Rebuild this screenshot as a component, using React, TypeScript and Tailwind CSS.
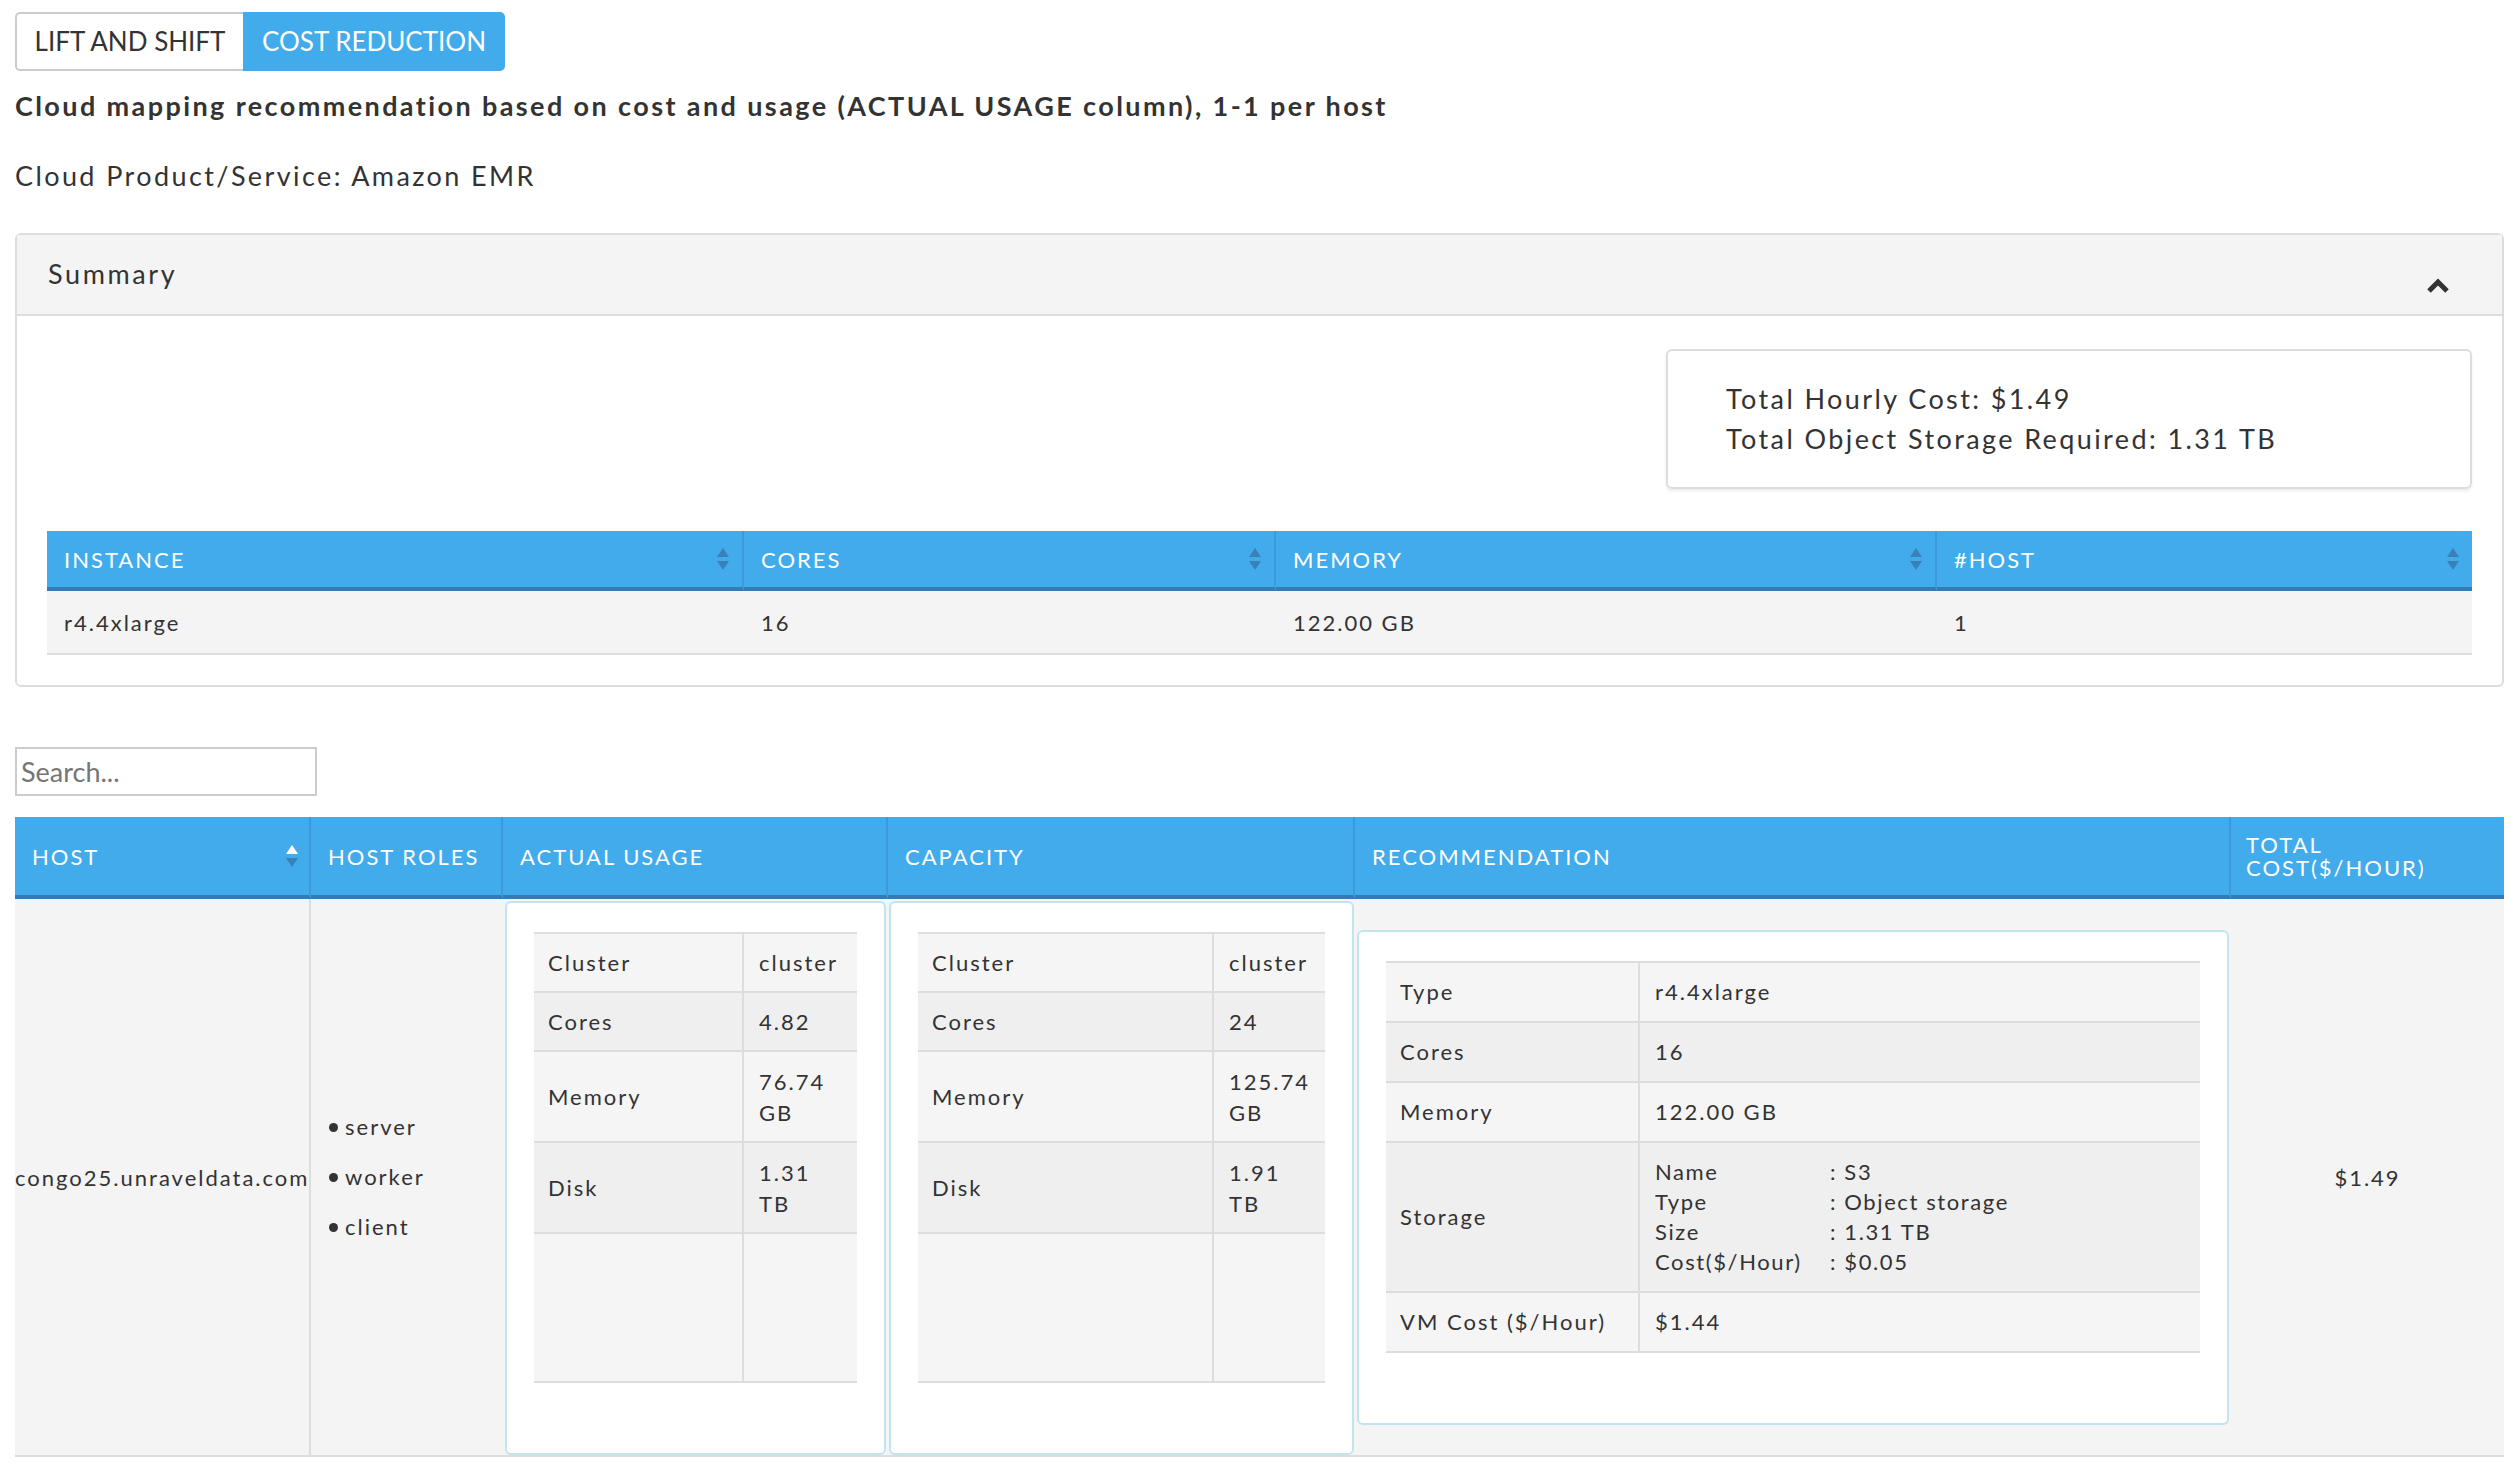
import React from "react";

type KvRow = { label: string; value?: React.ReactNode; empty?: boolean };

const summaryCols = [
  { label: "INSTANCE", value: "r4.4xlarge" },
  { label: "CORES", value: "16" },
  { label: "MEMORY", value: "122.00 GB" },
  { label: "#HOST", value: "1" },
];

const usageRows: KvRow[] = [
  { label: "Cluster", value: "cluster" },
  { label: "Cores", value: "4.82" },
  { label: "Memory", value: ["76.74", "GB"] },
  { label: "Disk", value: ["1.31", "TB"] },
  { label: "", empty: true },
];

const capacityRows: KvRow[] = [
  { label: "Cluster", value: "cluster" },
  { label: "Cores", value: "24" },
  { label: "Memory", value: ["125.74", "GB"] },
  { label: "Disk", value: ["1.91", "TB"] },
  { label: "", empty: true },
];

const storage = [
  ["Name", "S3"],
  ["Type", "Object storage"],
  ["Size", "1.31 TB"],
  ["Cost($/Hour)", "$0.05"],
];

const recRows: KvRow[] = [
  { label: "Type", value: "r4.4xlarge" },
  { label: "Cores", value: "16" },
  { label: "Memory", value: "122.00 GB" },
  {
    label: "Storage",
    value: (
      <div className="grid grid-cols-[175px_1fr] tracking-[1.6px]">
        {storage.map(([k, v]) => (
          <React.Fragment key={k}>
            <span>{k}</span>
            <span>: {v}</span>
          </React.Fragment>
        ))}
      </div>
    ),
  },
  { label: "VM Cost ($/Hour)", value: "$1.44" },
];

function SortIcon({ active }: { active?: boolean }) {
  return (
    <svg width="14" height="24" viewBox="0 0 14 24" className="shrink-0">
      <path d="M7 1 L13 10 H1 Z" fill={active ? "#ffffff" : "#3a80b9"} />
      <path d="M7 23 L13 14 H1 Z" fill="#3a80b9" />
    </svg>
  );
}

function renderValue(value: React.ReactNode) {
  if (Array.isArray(value)) {
    return (
      <div className="leading-[31px]">
        {value.map((line) => (
          <div key={line}>{line}</div>
        ))}
      </div>
    );
  }
  return value;
}

function KvTable({ rows, cols, pad }: { rows: KvRow[]; cols: string; pad: string }) {
  return (
    <div className="mb-[40px] border-t-2 border-[#ddd] leading-[30px]">
      {rows.map((row, i) => (
        <div
          key={i}
          className={`grid ${cols} border-b-2 border-[#ddd] ${i % 2 ? "bg-[#efefef]" : "bg-[#f5f5f5]"}`}
        >
          {row.empty ? (
            <>
              <div className="h-[147px]" />
              <div className="h-[147px] border-l-2 border-[#ddd]" />
            </>
          ) : (
            <>
              <div className={`flex items-center px-[14px] ${pad}`}>{row.label}</div>
              <div className={`flex items-center border-l-2 border-[#ddd] pl-[15px] pr-[10px] ${pad}`}>
                {renderValue(row.value)}
              </div>
            </>
          )}
        </div>
      ))}
    </div>
  );
}

function Card({ children }: { children: React.ReactNode }) {
  return (
    <div className="rounded-[6px] border-2 border-[#c3e4ee] bg-white px-[27px] pb-[30px] pt-[29px]">
      {children}
    </div>
  );
}

export default function App() {
  const hostHeaders = ["HOST", "HOST ROLES", "ACTUAL USAGE", "CAPACITY", "RECOMMENDATION"];

  return (
    <div className="min-h-screen bg-white pb-[20px] pl-[15px] pr-[13px] pt-[12px] font-[Lato,sans-serif] text-[#333]">
      <div className="flex h-[59px]">
        <button className="w-[228px] rounded-l-[5px] border-2 border-r-0 border-[#ccc] bg-white text-[26px] text-[#333]">
          LIFT AND SHIFT
        </button>
        <button className="w-[262px] rounded-r-[5px] bg-[#42abeb] text-[26px] text-white">COST REDUCTION</button>
      </div>

      <p className="mt-[16px] text-[27px] font-bold leading-[38px] tracking-[2.4px]">
        Cloud mapping recommendation based on cost and usage (ACTUAL USAGE column), 1-1 per host
      </p>
      <p className="mt-[32px] text-[27px] leading-[38px] tracking-[2.4px]">Cloud Product/Service: Amazon EMR</p>

      {/* summary panel */}
      <section className="mt-[38px] rounded-[6px] border-2 border-[#ddd]">
        <header className="flex h-[81px] items-center justify-between border-b-2 border-[#ddd] bg-[#f4f4f4] pl-[31px] pr-[53px]">
          <span className="text-[27px] tracking-[2.6px]">Summary</span>
          <svg width="22" height="15" viewBox="0 0 22 15" className="mt-[22px]">
            <polyline points="2,13 11,4 20,13" fill="none" stroke="#333" strokeWidth="5" />
          </svg>
        </header>

        <div className="px-[30px] pb-[30px] pt-[33px]">
          <div className="flex justify-end">
            <div className="flex h-[140px] w-[806px] flex-col justify-center rounded-[6px] border-2 border-[#ddd] pl-[58px] text-[27px] leading-[40px] tracking-[2.4px] shadow-[0_2px_3px_rgba(0,0,0,0.08)]">
              <p>Total Hourly Cost: $1.49</p>
              <p>Total Object Storage Required: 1.31 TB</p>
            </div>
          </div>

          <div className="mt-[42px] grid grid-cols-[697px_532px_661px_535px]">
            {summaryCols.map((c, i) => (
              <div
                key={c.label}
                className={`flex h-[60px] items-center justify-between border-b-4 border-b-[#337ab7] bg-[#42abeb] pl-[17px] pr-[12px] text-[22px] tracking-[2px] text-white ${i < 3 ? "border-r-2 border-r-[#3b9bd9]" : ""}`}
              >
                <span>{c.label}</span>
                <SortIcon />
              </div>
            ))}
            {summaryCols.map((c) => (
              <div
                key={c.label + "v"}
                className="flex h-[64px] items-center border-b-2 border-[#ddd] bg-[#f4f4f4] pl-[17px] text-[22px] tracking-[2px]"
              >
                {c.value}
              </div>
            ))}
          </div>
        </div>
      </section>

      <input
        placeholder="Search..."
        className="mt-[60px] block h-[49px] w-[302px] border-2 border-[#ccc] pl-[4px] text-[27px] outline-none placeholder:text-[#757575]"
      />

      {/* host table */}
      <div className="mt-[21px] grid grid-cols-[296px_192px_385px_467px_876px_273px] text-[22px] tracking-[2px]">
        {hostHeaders.map((h, i) => (
          <div
            key={h}
            className="flex h-[82px] items-center justify-between border-b-4 border-r-2 border-b-[#337ab7] border-r-[#3b9bd9] bg-[#42abeb] pl-[17px] pr-[10px] text-white"
          >
            <span>{h}</span>
            {i === 0 && <SortIcon active />}
          </div>
        ))}
        <div className="flex h-[82px] flex-col justify-center border-b-4 border-b-[#337ab7] bg-[#42abeb] pl-[15px] leading-[23px] text-white">
          <span>TOTAL</span>
          <span>COST($/HOUR)</span>
        </div>

        {/* body row */}
        <div className="flex items-center border-b-2 border-r-2 border-[#ddd] bg-[#f4f4f4]">congo25.unraveldata.com</div>
        <div className="flex flex-col justify-center gap-[20px] border-b-2 border-[#ddd] bg-[#f4f4f4] pl-[18px] leading-[30px]">
          {["server", "worker", "client"].map((r) => (
            <div key={r} className="flex items-center">
              <span className="mr-[7px] h-[9px] w-[9px] rounded-full bg-[#333]" />
              {r}
            </div>
          ))}
        </div>
        <div className="border-b-2 border-[#ddd] bg-[#f4f4f4] px-[2px] pt-[2px]">
          <Card>
            <KvTable rows={usageRows} cols="grid-cols-[208px_1fr]" pad="pt-[14px] pb-[13px]" />
          </Card>
        </div>
        <div className="border-b-2 border-[#ddd] bg-[#f4f4f4] px-[1px] pt-[2px]">
          <Card>
            <KvTable rows={capacityRows} cols="grid-cols-[294px_1fr]" pad="pt-[14px] pb-[13px]" />
          </Card>
        </div>
        <div className="flex items-center border-b-2 border-[#ddd] bg-[#f4f4f4] px-[2px]">
          <div className="w-full">
            <Card>
              <KvTable rows={recRows} cols="grid-cols-[252px_1fr]" pad="py-[14px]" />
            </Card>
          </div>
        </div>
        <div className="flex items-center justify-center border-b-2 border-[#ddd] bg-[#f4f4f4]">$1.49</div>
      </div>
    </div>
  );
}
